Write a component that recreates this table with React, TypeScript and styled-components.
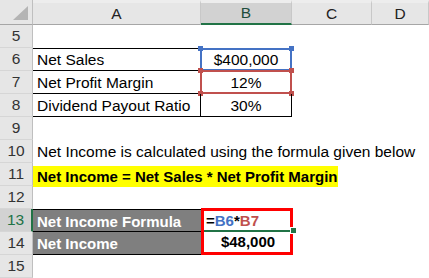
import React from "react";
import styled, { createGlobalStyle, css } from "styled-components";

const GlobalStyle = createGlobalStyle`
  html, body {
    margin: 0;
    padding: 0;
    background: #ffffff;
  }
  body {
    font-family: "Liberation Sans", Arial, sans-serif;
  }
`;

const BLUE = "#4472c4";
const RED = "#c0504d";
const GREEN = "#217346";

const Sheet = styled.div`
  width: 429px;
  height: 278px;
  display: grid;
  grid-template-columns: 33px 168px 91px 80px 57px;
  grid-template-rows: 25px repeat(11, 23px);
  overflow: hidden;
  background: #fff;
`;

const Corner = styled.div`
  background: #e6e6e6;
  border-right: 1px solid #bfbfbf;
  border-bottom: 1px solid #a6a6a6;
  box-sizing: border-box;
  display: flex;
  justify-content: flex-end;
  align-items: flex-end;
  padding: 0 4px 4px 0;
`;

const Triangle = styled.div`
  width: 0;
  height: 0;
  border-left: 15px solid transparent;
  border-bottom: 14px solid #b4b4b4;
`;

const ColHeader = styled.div<{ $active?: boolean }>`
  box-sizing: border-box;
  background: ${(p) => (p.$active ? "#d2d2d2" : "#e6e6e6")};
  border-right: 1px solid #c8c8c8;
  border-bottom: ${(p) => (p.$active ? `2px solid ${GREEN}` : "1px solid #a6a6a6")};
  border-top: 3px solid #ededed;
  display: flex;
  align-items: center;
  justify-content: center;
  font-size: 15.5px;
  color: ${(p) => (p.$active ? "#1f4e3d" : "#222")};
`;

const RowHeader = styled.div<{ $active?: boolean }>`
  box-sizing: border-box;
  background: ${(p) => (p.$active ? "#d2d2d2" : "#e6e6e6")};
  border-right: ${(p) => (p.$active ? `2px solid ${GREEN}` : "1px solid #bfbfbf")};
  border-bottom: 1px solid #d6d6d6;
  display: flex;
  align-items: center;
  justify-content: center;
  font-size: 15.5px;
  color: ${(p) => (p.$active ? GREEN : "#333")};
`;

const Cell = styled.div<{
  $align?: "left" | "center";
  $top?: boolean;
  $bottom?: boolean;
  $right?: boolean;
  $dark?: boolean;
}>`
  position: relative;
  box-sizing: border-box;
  display: flex;
  align-items: center;
  justify-content: ${(p) => (p.$align === "center" ? "center" : "flex-start")};
  padding: 1px 4px 0;
  font-size: 15.5px;
  color: #000;
  white-space: nowrap;
  overflow: visible;
  ${(p) => p.$top && css`border-top: 1px solid #000;`}
  ${(p) => p.$bottom && css`border-bottom: 1px solid #000;`}
  ${(p) => p.$right && css`border-right: 1px solid #000;`}
  ${(p) =>
    p.$dark &&
    css`
      background: #7f7f7f;
      color: #fff;
      font-weight: bold;
      font-size: 15px;
    `}
  z-index: 1;
`;

const Yellow = styled.div`
  box-sizing: border-box;
  margin: 2px 0 0 -4px;
  padding-left: 4px;
  width: 310px;
  line-height: 21px;
  background: #ffff00;
  font-weight: bold;
  font-size: 15px;
`;

const Range = styled.div<{ $color: string }>`
  position: absolute;
  left: -1px;
  right: -1px;
  top: -1px;
  bottom: -1px;
  border: 2px solid ${(p) => p.$color};
  pointer-events: none;
  z-index: 2;
`;

const Handle = styled.div<{ $color: string; $x: "l" | "r"; $y: "t" | "b" }>`
  position: absolute;
  width: 5px;
  height: 5px;
  background: ${(p) => p.$color};
  ${(p) => (p.$x === "l" ? "left: -4px;" : "right: -4px;")}
  ${(p) => (p.$y === "t" ? "top: -4px;" : "bottom: -4px;")}
`;

const Ref = styled.span<{ $color?: string }>`
  color: ${(p) => p.$color || "#000"};
`;

const FormulaBox = styled.div`
  grid-column: 3;
  grid-row: 10 / span 2;
  box-sizing: border-box;
  margin: -1px -1px 0 0;
  border: 3px solid #ff0000;
  display: grid;
  grid-template-rows: 1fr 1fr;
  z-index: 3;
  font-size: 15px;
  font-weight: bold;
`;

const FormulaCell = styled.div<{ $active?: boolean }>`
  position: relative;
  display: flex;
  align-items: center;
  justify-content: ${(p) => (p.$active ? "flex-start" : "center")};
  padding-left: 2px;
  ${(p) => p.$active && css`border-bottom: 2px solid ${GREEN};`}
`;

const FillHandle = styled.div`
  position: absolute;
  right: -7px;
  bottom: -4px;
  width: 5px;
  height: 5px;
  background: ${GREEN};
  border: 1px solid #fff;
`;

const Blank = styled.div``;

const Corners = ({ color }: { color: string }) => (
  <>
    <Handle $color={color} $x="l" $y="t" />
    <Handle $color={color} $x="r" $y="t" />
    <Handle $color={color} $x="l" $y="b" />
    <Handle $color={color} $x="r" $y="b" />
  </>
);

const App = () => {
  const cols = ["A", "B", "C", "D"];
  return (
    <>
      <GlobalStyle />
      <Sheet>
        <Corner>
          <Triangle />
        </Corner>
        {cols.map((c) => (
          <ColHeader key={c} $active={c === "B"}>
            {c}
          </ColHeader>
        ))}

        {/* row 5 */}
        <RowHeader>5</RowHeader>
        <Blank />
        <Blank />
        <Blank />
        <Blank />

        {/* row 6 */}
        <RowHeader>6</RowHeader>
        <Cell $top $bottom $right>Net Sales</Cell>
        <Cell $align="center" $top $bottom $right>
          $400,000
          <Range $color={BLUE}>
            <Corners color={BLUE} />
          </Range>
        </Cell>
        <Blank />
        <Blank />

        {/* row 7 */}
        <RowHeader>7</RowHeader>
        <Cell $bottom $right>Net Profit Margin</Cell>
        <Cell $align="center" $bottom $right>
          12%
          <Range $color={RED}>
            <Corners color={RED} />
          </Range>
        </Cell>
        <Blank />
        <Blank />

        {/* row 8 */}
        <RowHeader>8</RowHeader>
        <Cell $bottom $right>Dividend Payout Ratio</Cell>
        <Cell $align="center" $bottom $right>30%</Cell>
        <Blank />
        <Blank />

        <RowHeader>9</RowHeader>
        <Blank />
        <Blank />
        <Blank />
        <Blank />

        <RowHeader>10</RowHeader>
        <Cell>Net Income is calculated using the formula given below</Cell>
        <Blank />
        <Blank />
        <Blank />

        <RowHeader>11</RowHeader>
        <Cell>
          <Yellow>Net Income = Net Sales * Net Profit Margin</Yellow>
        </Cell>
        <Blank />
        <Blank />
        <Blank />

        <RowHeader>12</RowHeader>
        <Blank />
        <Blank />
        <Blank />
        <Blank />

        <RowHeader $active>13</RowHeader>
        <Cell $dark $top $bottom>Net Income Formula</Cell>
        <FormulaBox>
          <FormulaCell $active>
            <Ref>=</Ref>
            <Ref $color={BLUE}>B6</Ref>
            <Ref>*</Ref>
            <Ref $color={RED}>B7</Ref>
            <FillHandle />
          </FormulaCell>
          <FormulaCell>$48,000</FormulaCell>
        </FormulaBox>
        <Blank />
        <Blank />

        <RowHeader>14</RowHeader>
        <Cell $dark $bottom>Net Income</Cell>
        <Blank />
        <Blank />

        <RowHeader>15</RowHeader>
        <Blank />
        <Blank />
        <Blank />
        <Blank />
      </Sheet>
    </>
  );
};

export default App;
